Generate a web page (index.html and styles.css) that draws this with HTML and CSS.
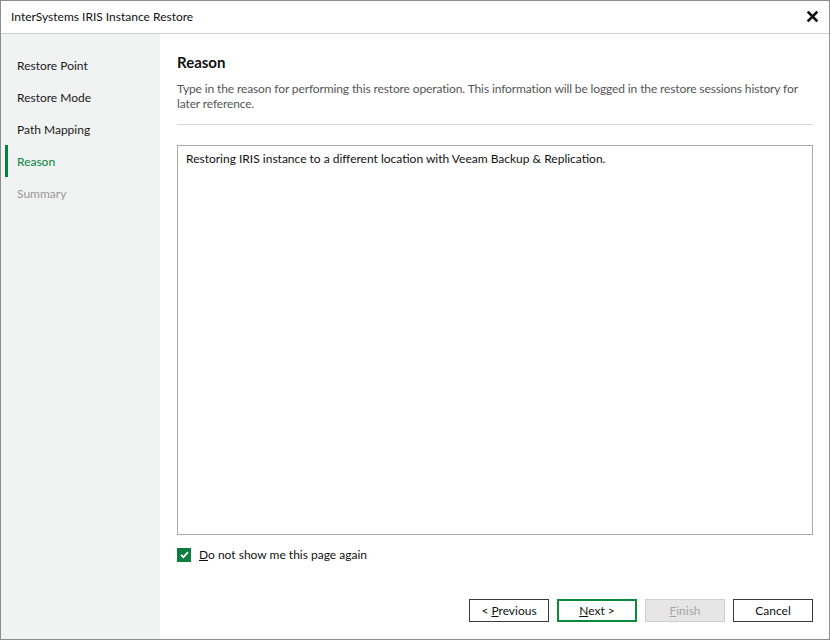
FILE: index.html
```html
<!doctype html>
<html lang="en">
  <head>
    <meta charset="UTF-8" />
    <title>InterSystems IRIS Instance Restore</title>
    <link rel="stylesheet" href="styles.css">
  </head>
  <body>
    <div class="window">
      <div class="titlebar">
        <span class="title">InterSystems IRIS Instance Restore</span>
        <svg class="close" width="11" height="11" viewBox="0 0 11 11">
          <path d="M1.5 1.5 L9.5 9.5 M9.5 1.5 L1.5 9.5" stroke="#111" stroke-width="2.6" stroke-linecap="square" />
        </svg>
      </div>

      <div class="main">
        <nav class="steps">
          <div class="step">Restore Point</div>
          <div class="step">Restore Mode</div>
          <div class="step">Path Mapping</div>
          <div class="step active">Reason</div>
          <div class="step disabled">Summary</div>
        </nav>

        <section class="content">
          <h1>Reason</h1>
          <p class="desc">Type in the reason for performing this restore operation. This information will be logged in the restore sessions history for later reference.</p>
          <div class="divider"></div>

          <div class="reason-box">Restoring IRIS instance to a different location with Veeam Backup &amp; Replication.</div>

          <label class="check">
            <span class="box">
              <svg width="13" height="13" viewBox="0 0 13 13">
                <path d="M3 6.8 L5.4 9.2 L10 4.2" fill="none" stroke="#fff" stroke-width="1.8" />
              </svg>
            </span>
            <span><u>D</u>o not show me this page again</span>
          </label>

          <div class="buttons">
            <button class="btn">&lt; <u>P</u>revious</button>
            <button class="btn primary"><u>N</u>ext &gt;</button>
            <button class="btn" disabled><u>F</u>inish</button>
            <button class="btn">Cancel</button>
          </div>
        </section>
      </div>
    </div>
  </body>
</html>
```

FILE: styles.css
```css
* {
  margin: 0;
  padding: 0;
  box-sizing: border-box;
}

body {
  font-family: Lato, "Noto Sans", sans-serif;
  font-size: 12px;
  color: #1a1a1a;
  background: #fff;
}

.window {
  width: 830px;
  height: 640px;
  border: 1px solid #8c8c8c;
  display: flex;
  flex-direction: column;
  background: #fff;
}

.titlebar {
  height: 33px;
  flex-shrink: 0;
  border-bottom: 1px solid #cfcfcf;
  display: flex;
  align-items: center;
  justify-content: space-between;
  padding: 0 11px 1px 10px;
}

.title {
  font-size: 12px;
  color: #111;
}

.close {
  display: block;
}

.main {
  flex: 1;
  display: flex;
}

.steps {
  width: 159px;
  background: #f1f2f2;
  padding-top: 15px;
}

.step {
  height: 32px;
  display: flex;
  align-items: center;
  font-size: 12px;
  color: #1a1a1a;
  border-left: 3px solid transparent;
  margin-left: 4px;
  padding-left: 9px;
}

.step.active {
  color: #00843d;
  border-left-color: #00843d;
}

.step.disabled {
  color: #999;
}

.content {
  flex: 1;
  padding: 17px 16px 17px 17px;
  display: flex;
  flex-direction: column;
}

h1 {
  font-size: 15px;
  font-weight: 700;
  color: #111;
  line-height: 22px;
}

.desc {
  margin-top: 8px;
  font-size: 12px;
  line-height: 15px;
  letter-spacing: -0.12px;
  color: #555;
}

.divider {
  height: 1px;
  background: #d6d6d6;
  margin-top: 13px;
}

.reason-box {
  margin-top: 20px;
  height: 390px;
  border: 1px solid #a9a9a9;
  padding: 4px 8px;
  font-size: 12px;
  line-height: 18px;
  color: #111;
}

.check {
  margin-top: 12px;
  display: flex;
  align-items: center;
  gap: 8px;
  font-size: 12px;
  color: #111;
}

.box {
  width: 14px;
  height: 14px;
  background: #0b7d3e;
  display: flex;
  align-items: center;
  justify-content: center;
}

.buttons {
  margin-top: auto;
  display: flex;
  justify-content: flex-end;
  gap: 8px;
}

.btn {
  width: 80px;
  height: 23px;
  font-family: inherit;
  font-size: 12px;
  color: #111;
  background: #fff;
  border: 1px solid #3a3a3a;
}

.btn.primary {
  border: 2px solid #0b8a3e;
}

.btn:disabled {
  background: #e6e6e6;
  border-color: #cfcfcf;
  color: #a6a6a6;
}
```
